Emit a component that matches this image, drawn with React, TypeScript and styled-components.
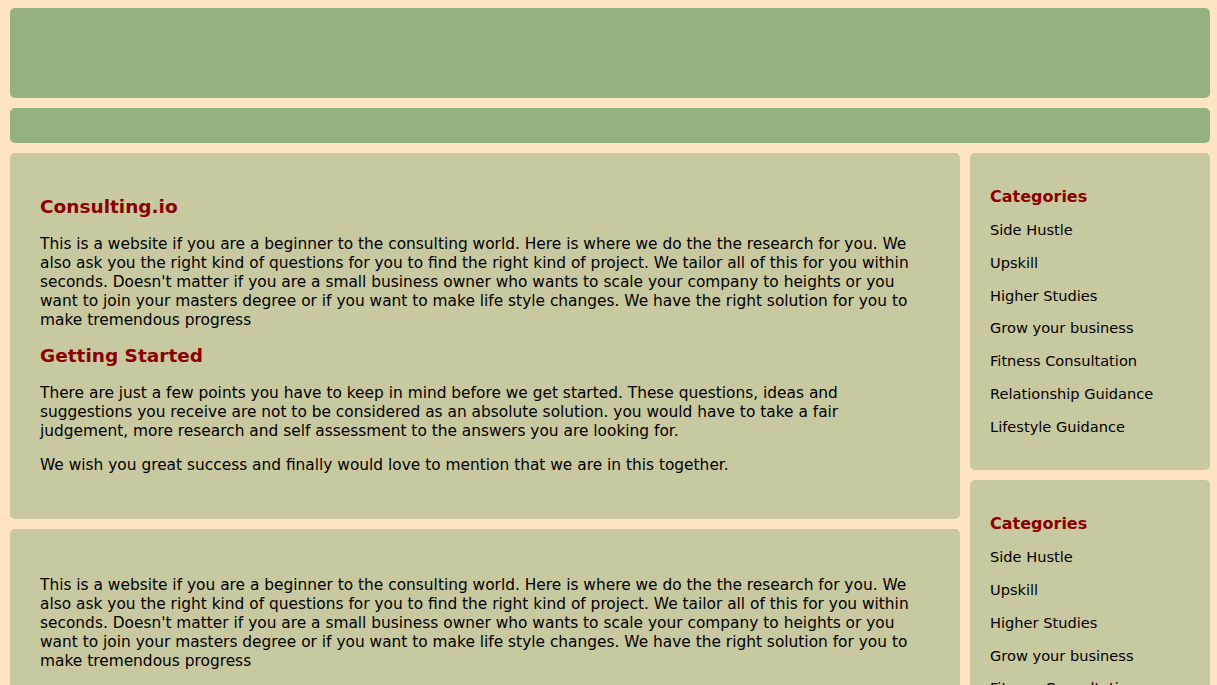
import styled, { createGlobalStyle } from 'styled-components'

const categories = [
  'Side Hustle',
  'Upskill',
  'Higher Studies',
  'Grow your business',
  'Fitness Consultation',
  'Relationship Guidance',
  'Lifestyle Guidance',
]

const intro =
  "This is a website if you are a beginner to the consulting world. Here is where we do the the research for you. We also ask you the right kind of questions for you to find the right kind of project. We tailor all of this for you within seconds. Doesn't matter if you are a small business owner who wants to scale your company to heights or you want to join your masters degree or if you want to make life style changes. We have the right solution for you to make tremendous progress"

const CategoryCard = () => (
  <SideCard>
    <SideTitle>Categories</SideTitle>
    <List>
      {categories.map((c) => (
        <Item key={c}>{c}</Item>
      ))}
    </List>
  </SideCard>
)

export default function App() {
  return (
    <>
      <GlobalStyle />
      <Page>
        <Header />
        <Nav />
        <Main>
          <Content>
            <Card>
              <Title $first>Consulting.io</Title>
              <Text>{intro}</Text>
              <Title>Getting Started</Title>
              <Text>
                There are just a few points you have to keep in mind before we get started. These
                questions, ideas and suggestions you receive are not to be considered as an absolute
                solution. you would have to take a fair judgement, more research and self assessment
                to the answers you are looking for.
              </Text>
              <Text>
                We wish you great success and finally would love to mention that we are in this
                together.
              </Text>
            </Card>
            <Card>
              <Text>{intro}</Text>
              <Text>
                There are just a few points you have to keep in mind before we get started. These
                questions, ideas and suggestions you receive are not to be considered as an absolute
                solution.
              </Text>
            </Card>
          </Content>
          <Sidebar>
            <CategoryCard />
            <CategoryCard />
          </Sidebar>
        </Main>
      </Page>
    </>
  )
}

const GlobalStyle = createGlobalStyle`
  body {
    margin: 0;
    background: #ffe4c4;
    font-family: 'DejaVu Sans', sans-serif;
    color: #000;
  }
`
const Page = styled.div`
  padding: 8px 7px 10px 10px;
  display: flex;
  flex-direction: column;
  gap: 10px;
`
const Header = styled.header`
  height: 90px;
  background: #94b17f;
  border-radius: 5px;
`
const Nav = styled.nav`
  height: 35px;
  background: #94b17f;
  border-radius: 5px;
`
const Main = styled.div`
  display: flex;
  gap: 10px;
  align-items: flex-start;
`
const Content = styled.div`
  flex: 1;
  display: flex;
  flex-direction: column;
  gap: 10px;
`
const Card = styled.section`
  background: #c9c9a1;
  border-radius: 5px;
  padding: 32px 30px 29px;
`
const Title = styled.h3<{ $first?: boolean }>`
  font-size: 18.5px;
  color: #8b0000;
  margin: ${(p) => (p.$first ? '10.6px' : '14px')} 0 18px;
`
const Text = styled.p`
  font-size: 15.4px;
  line-height: 19px;
  margin: 15px 0;
`
const Sidebar = styled.aside`
  width: 240px;
  display: flex;
  flex-direction: column;
  gap: 10px;
`
const SideCard = styled.div`
  background: #c9c9a1;
  border-radius: 5px;
  padding: 20px;
`
const SideTitle = styled.h4`
  font-size: 16px;
  color: #8b0000;
  margin: 14px 0 8px;
`
const List = styled.ul`
  list-style: none;
  margin: 0 0 7px;
  padding: 0;
`
const Item = styled.li`
  font-size: 14.6px;
  line-height: 16.75px;
  padding: 8px 0;
`
